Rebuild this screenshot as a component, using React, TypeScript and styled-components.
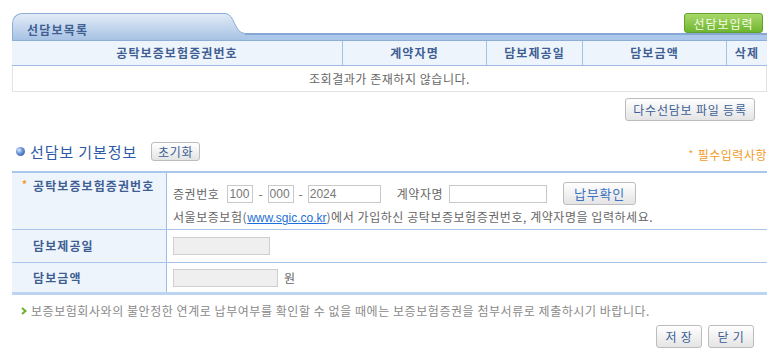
import React from 'react';
import styled, { createGlobalStyle } from 'styled-components';

const GlobalStyle = createGlobalStyle`
  html, body {
    margin: 0;
    padding: 0;
    background: #ffffff;
  }
  body {
    font-family: 'Noto Sans CJK KR', 'Noto Sans', sans-serif;
    font-size: 12px;
    line-height: 16px;
    color: #666666;
    letter-spacing: 0.55px;
  }
  * {
    box-sizing: border-box;
  }
`;

const Page = styled.div`
  width: 773px;
  padding: 13px 6px 0 12px;
`;

/* ---------- list header (tab + green button) ---------- */

const ListHead = styled.div`
  display: flex;
  align-items: flex-end;
  height: 27px;
`;

const Tab = styled.div`
  display: flex;
  flex: none;
  height: 27px;
`;

const TabBody = styled.div`
  width: 213px;
  height: 27px;
  padding: 9px 0 0 14px;
  border-top: 1px solid #8eaed6;
  border-left: 1px solid #8eaed6;
  border-radius: 10px 0 0 0;
  background: linear-gradient(#e2ecf7, #a7c2e4);
  font-weight: bold;
  color: #3f5f93;
  line-height: 14px;
  letter-spacing: 1.2px;
`;

const HeadRest = styled.div`
  flex: 1;
  display: flex;
  flex-direction: column;
`;

const HeadActions = styled.div`
  display: flex;
  justify-content: flex-end;
  height: 20px;
  padding-right: 4px;
`;

const GreenButton = styled.button`
  width: 79px;
  height: 20px;
  padding: 0;
  border: 1px solid #62a22a;
  border-radius: 3px;
  background: linear-gradient(#a8d86a, #6fb52e);
  color: #f4fbe9;
  font-family: inherit;
  font-size: 12px;
  letter-spacing: 1px;
`;

const HeadStrip = styled.div`
  height: 7px;
  border-top: 2px solid #86a8d5;
  background: #abc8ea;
`;

/* ---------- list grid ---------- */

const ListGrid = styled.div`
  display: grid;
  grid-template-columns: 330px 144px 96px 144px 1fr;
  border-top: 1px solid #8eaed6;
`;

const HeadCell = styled.div<{ $first?: boolean }>`
  height: 25px;
  display: flex;
  align-items: center;
  justify-content: center;
  background: #eef4fc;
  border-bottom: 1px solid #9fbde4;
  border-left: ${(p) => (p.$first ? '0' : '1px solid #a3c0e6')};
  font-weight: bold;
  color: #3f5f93;
  letter-spacing: 1.1px;
`;

const EmptyCell = styled.div`
  grid-column: 1 / -1;
  height: 26px;
  display: flex;
  align-items: center;
  justify-content: center;
  border: 1px solid #e3e3e3;
  border-top: 0;
  color: #666666;
`;

/* ---------- buttons ---------- */

const GrayButton = styled.button<{ $w: number; $h?: number }>`
  width: ${(p) => p.$w}px;
  height: ${(p) => p.$h ?? 23}px;
  padding: 0;
  border: 1px solid #bcbcbc;
  border-radius: 3px;
  background: linear-gradient(#ffffff, #e4e4e4);
  color: #3b5f95;
  font-family: inherit;
  font-size: 12px;
  letter-spacing: 0.8px;
  white-space: nowrap;
`;

const RightRow = styled.div<{ $mt: number; $pr: number }>`
  display: flex;
  justify-content: flex-end;
  gap: 6px;
  margin-top: ${(p) => p.$mt}px;
  padding-right: ${(p) => p.$pr}px;
`;

/* ---------- section title ---------- */

const SectionRow = styled.div`
  display: flex;
  align-items: center;
  height: 19px;
  margin-top: 21px;
`;

const Bullet = styled.span`
  width: 9px;
  height: 9px;
  margin-left: 4px;
  border-radius: 50%;
  background: radial-gradient(circle at 35% 35%, #e4eeff 0, #6b95d8 40%, #1f4c9c 100%);
`;

const SectionTitle = styled.h2`
  margin: 0 14px 0 5px;
  font-size: 15px;
  font-weight: normal;
  line-height: 19px;
  color: #2c5aa4;
  letter-spacing: 0.9px;
`;

const Required = styled.span`
  margin-left: auto;
  align-self: flex-end;
  margin-bottom: -2px;
  color: #f39a1e;
  letter-spacing: 0.5px;
`;

const Star = styled.span`
  display: inline-block;
  width: 6px;
  color: #f39a1e;
  font-size: 10px;
  vertical-align: 2px;
`;

/* ---------- form ---------- */

const FormTable = styled.div`
  margin-top: 10px;
  border-top: 2px solid #aac6ea;
`;

const FormRow = styled.div<{ $h: number; $last?: boolean }>`
  display: grid;
  grid-template-columns: 155px 1fr;
  height: ${(p) => p.$h}px;
  border-bottom: ${(p) => (p.$last ? '3px solid #bcd3f1' : '1px solid #a9c5ea')};
`;

const FormLabel = styled.div<{ $top?: boolean }>`
  display: flex;
  align-items: ${(p) => (p.$top ? 'flex-start' : 'center')};
  padding: ${(p) => (p.$top ? '6px' : '0')} 0 0 10px;
  background: #eef4fc;
  border-right: 1px solid #9dbde4;
  font-weight: bold;
  color: #3f5f93;
  line-height: 14px;
  letter-spacing: 1.1px;
`;

const StarSlot = styled.span`
  width: 11px;
  flex: none;
  color: #f39a1e;
  font-size: 10px;
  line-height: 10px;
`;

const FormCell = styled.div<{ $pad?: string }>`
  display: flex;
  flex-direction: column;
  justify-content: center;
  padding: ${(p) => p.$pad ?? '0 6px'};
`;

const Line = styled.div`
  display: flex;
  align-items: center;
  gap: 6px;
  height: 23px;
`;

const HelpLine = styled.div`
  margin-top: 4px;
  line-height: 16px;
  white-space: nowrap;
`;

const Field = styled.input<{ $w: number }>`
  width: ${(p) => p.$w}px;
  height: 18px;
  padding: 0 1px;
  border: 1px solid #c9c9c9;
  background: #ffffff;
  color: #777777;
  font-family: 'Liberation Sans', 'Noto Sans CJK KR', sans-serif;
  font-size: 12px;
  letter-spacing: 0;
  outline: none;
`;

const GrayField = styled(Field)`
  background: #efefef;
  border-color: #cfcfcf;
`;

const Spaced = styled.span<{ $ml?: number; $mr?: number }>`
  margin-left: ${(p) => p.$ml ?? 0}px;
  margin-right: ${(p) => p.$mr ?? 0}px;
  white-space: nowrap;
`;

const Dash = styled.span`
  margin: 0 -1px;
  letter-spacing: 0;
`;

const CheckButton = styled(GrayButton)`
  margin-left: 10px;
  font-size: 13px;
  color: #3a71bf;
`;

const SiteLink = styled.a`
  color: #1c6fd6;
  text-decoration: underline;
  font-family: 'Liberation Sans', 'Noto Sans CJK KR', sans-serif;
  letter-spacing: 0;
`;

/* ---------- footer ---------- */

const Notice = styled.p`
  display: flex;
  align-items: center;
  gap: 4px;
  margin: 9px 0 0;
  padding-left: 9px;
  color: #8a8a8a;
  line-height: 14px;
  white-space: nowrap;
`;

const Chevron = () => (
  <svg width="6" height="8" viewBox="0 0 6 8">
    <path d="M1 1 L4.5 4 L1 7" fill="none" stroke="#6cb02c" strokeWidth="2" />
  </svg>
);

const TabCurve = () => (
  <svg width="20" height="27" viewBox="0 0 20 27">
    <defs>
      <linearGradient id="tabg" x1="0" y1="0" x2="0" y2="27" gradientUnits="userSpaceOnUse">
        <stop offset="0" stopColor="#e2ecf7" />
        <stop offset="1" stopColor="#a7c2e4" />
      </linearGradient>
    </defs>
    <path d="M0 0 C10 0 9 20 20 20 L20 27 L0 27 Z" fill="url(#tabg)" />
    <path d="M0 0.5 C10 0.5 9 20.5 20 20.5" fill="none" stroke="#8eaed6" />
  </svg>
);

const columns = ['공탁보증보험증권번호', '계약자명', '담보제공일', '담보금액', '삭제'];

export default function App() {
  return (
    <Page>
      <GlobalStyle />

      <ListHead>
        <Tab>
          <TabBody>선담보목록</TabBody>
          <TabCurve />
        </Tab>
        <HeadRest>
          <HeadActions>
            <GreenButton>선담보입력</GreenButton>
          </HeadActions>
          <HeadStrip />
        </HeadRest>
      </ListHead>

      <ListGrid>
        {columns.map((c, i) => (
          <HeadCell key={c} $first={i === 0}>
            {c}
          </HeadCell>
        ))}
        <EmptyCell>조회결과가 존재하지 않습니다.</EmptyCell>
      </ListGrid>

      <RightRow $mt={6} $pr={12}>
        <GrayButton $w={130}>다수선담보 파일 등록</GrayButton>
      </RightRow>

      <SectionRow>
        <Bullet />
        <SectionTitle>선담보 기본정보</SectionTitle>
        <GrayButton $w={49} $h={19}>초기화</GrayButton>
        <Required>
          <Star>*</Star> 필수입력사항
        </Required>
      </SectionRow>

      <FormTable>
        <FormRow $h={57}>
          <FormLabel $top>
            <StarSlot>*</StarSlot>공탁보증보험증권번호
          </FormLabel>
          <FormCell $pad="6px 6px 0">
            <Line>
              <Spaced $mr={2}>증권번호</Spaced>
              <Field $w={26} defaultValue="100" />
              <Dash>-</Dash>
              <Field $w={26} defaultValue="000" />
              <Dash>-</Dash>
              <Field $w={73} defaultValue="2024" />
              <Spaced $ml={10}>계약자명</Spaced>
              <Field $w={98} />
              <CheckButton $w={73}>납부확인</CheckButton>
            </Line>
            <HelpLine>
              서울보증보험(<SiteLink href="#">www.sgic.co.kr</SiteLink>)에서 가입하신 공탁보증보험증권번호, 계약자명을
              입력하세요.
            </HelpLine>
          </FormCell>
        </FormRow>
        <FormRow $h={33}>
          <FormLabel>
            <StarSlot />담보제공일
          </FormLabel>
          <FormCell>
            <GrayField $w={97} disabled />
          </FormCell>
        </FormRow>
        <FormRow $h={32} $last>
          <FormLabel>
            <StarSlot />담보금액
          </FormLabel>
          <FormCell>
            <Line>
              <GrayField $w={105} disabled />
              <span>원</span>
            </Line>
          </FormCell>
        </FormRow>
      </FormTable>

      <Notice>
        <Chevron />
        보증보험회사와의 불안정한 연계로 납부여부를 확인할 수 없을 때에는 보증보험증권을 첨부서류로 제출하시기 바랍니다.
      </Notice>

      <RightRow $mt={7} $pr={13}>
        <GrayButton $w={46}>저 장</GrayButton>
        <GrayButton $w={46}>닫 기</GrayButton>
      </RightRow>
    </Page>
  );
}
